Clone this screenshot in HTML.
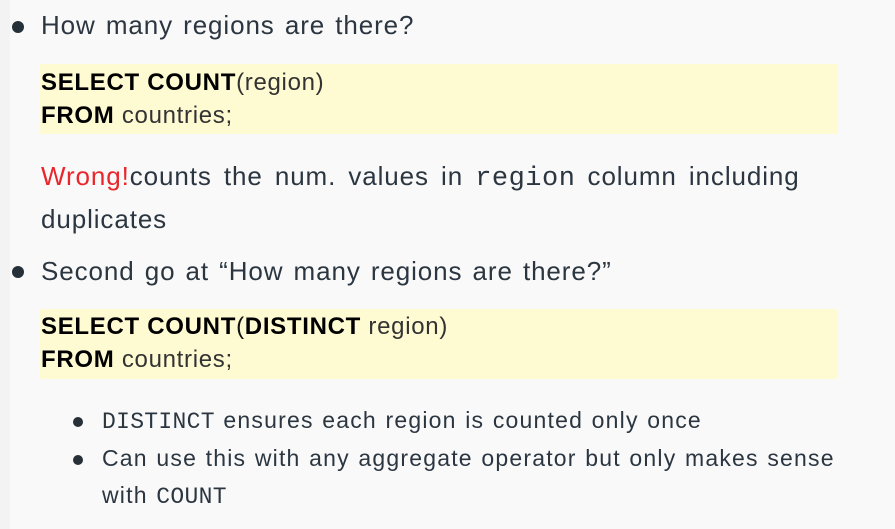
<!DOCTYPE html>
<html><head><meta charset="utf-8"><style>
body{margin:0;width:895px;height:529px;background:#f9f9f9;position:relative;overflow:hidden;font-family:"Liberation Sans",sans-serif;color:#2b3641}
.strip{position:absolute;left:0;top:0;width:10px;height:529px;background:#f3f3f3}
.t{position:absolute;white-space:nowrap;font-size:26px;letter-spacing:0.9px;word-spacing:2px}
.dot{position:absolute;width:12px;height:12px;border-radius:50%;background:#253039}
.box{position:absolute;left:40px;width:798px;height:70px;background:#fefad2}
.c{position:absolute;white-space:nowrap;font-size:24px;letter-spacing:0.7px;color:#111}
.c b{color:#000}
.m{font-family:"Liberation Mono",monospace}
.s{position:absolute;white-space:nowrap;font-size:23px;letter-spacing:1.2px;word-spacing:1px}
</style></head><body>
<div class="strip"></div>
<div class="dot" style="left:12px;top:21px"></div>
<div class="t" style="left:41px;top:10px">How many regions are there?</div>
<div class="box" style="top:64px"></div>
<div class="c" style="left:41px;top:69px"><b>SELECT COUNT</b><span style="color:#333">(region)</span></div>
<div class="c" style="left:41px;top:102px"><b>FROM</b> <span style="color:#333">countries;</span></div>
<div class="t" style="left:41px;top:161px;word-spacing:4px"><span style="color:#e8262b">Wrong!</span>counts the num. values in <span class="m" style="letter-spacing:0.5px;font-size:27px">region</span> column including</div>
<div class="t" style="left:41px;top:204px">duplicates</div>
<div class="dot" style="left:12px;top:266px"></div>
<div class="t" style="left:41px;top:256px">Second go at “How many regions are there?”</div>
<div class="box" style="top:309px"></div>
<div class="c" style="left:41px;top:313px"><b>SELECT COUNT</b>(<b>DISTINCT</b> <span style="color:#333">region)</span></div>
<div class="c" style="left:41px;top:346px"><b>FROM</b> <span style="color:#333">countries;</span></div>
<div class="dot" style="left:73px;top:417px;width:10px;height:10px"></div>
<div class="s" style="left:102px;top:407px"><span class="m" style="letter-spacing:0.3px">DISTINCT</span> ensures each region is counted only once</div>
<div class="dot" style="left:73px;top:455px;width:10px;height:10px"></div>
<div class="s" style="left:102px;top:445px">Can use this with any aggregate operator but only makes sense</div>
<div class="s" style="left:102px;top:482px">with <span class="m" style="letter-spacing:0.3px">COUNT</span></div>
</body></html>
